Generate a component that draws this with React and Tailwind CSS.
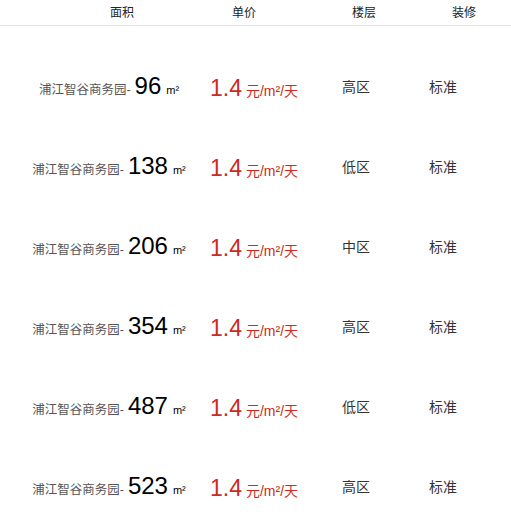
import React from "react";

const ROWS = [
  { area: 96, floor: "高区" },
  { area: 138, floor: "低区" },
  { area: 206, floor: "中区" },
  { area: 354, floor: "高区" },
  { area: 487, floor: "低区" },
  { area: 523, floor: "高区" },
];

const FONT = "font-['Liberation_Sans','Noto_Sans_CJK_SC',sans-serif]";

export default function App() {
  return (
    <div className={`w-[511px] h-[515px] bg-white overflow-hidden ${FONT}`}>
      {/* Header */}
      <div className="flex h-[26px] items-center border-b border-[#e4e4e4] pl-[110px] text-[12px] text-[#222]">
        <div className="w-[122px]">面积</div>
        <div className="w-[120px]">单价</div>
        <div className="w-[100px]">楼层</div>
        <div>装修</div>
      </div>

      {/* Rows */}
      <div className="pt-[21px]">
        {ROWS.map((r) => (
          <div key={r.area} className="flex h-[80px] items-center">
            <div className="w-[210px] pl-[8px] flex justify-center items-baseline">
              <span className="text-[12.5px] text-[#555]">浦江智谷商务园-</span>
              <span className="text-[24px] text-black leading-none ml-[4px]">{r.area}</span>
              <span className="text-[11px] text-black ml-[5px]">m²</span>
            </div>
            <div className="w-[132px] flex items-baseline text-[#cc2a22] pt-[4px]">
              <span className="text-[23px] leading-none">1.4</span>
              <span className="text-[14px] ml-[4px]">元/m²/天</span>
            </div>
            <div className="w-[87px] text-[14px] text-[#333]">{r.floor}</div>
            <div className="text-[14px] text-[#333]">标准</div>
          </div>
        ))}
      </div>
    </div>
  );
}
